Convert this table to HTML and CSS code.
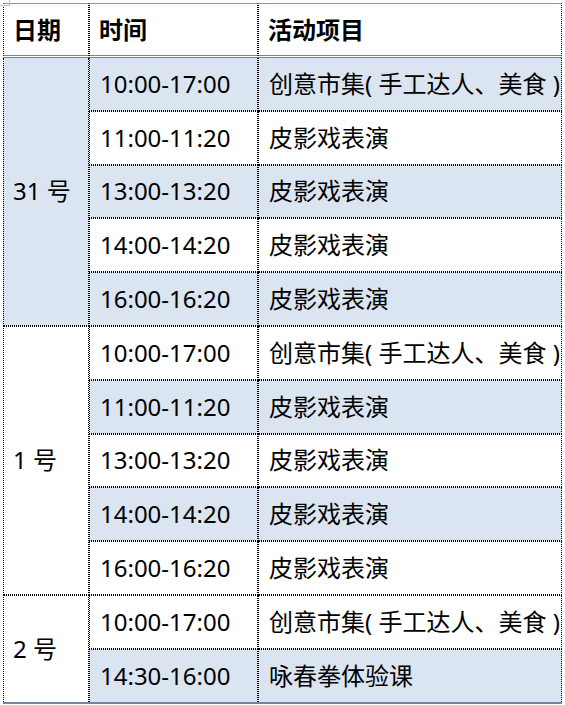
FILE: index.html
```html
<!DOCTYPE html>
<html lang="zh-CN">
<head>
<meta charset="utf-8">
<title>活动安排</title>
<link rel="stylesheet" href="styles.css">
</head>
<body>
<div class="handle"></div>
<table class="schedule">
  <colgroup>
    <col class="c-date">
    <col class="c-time">
    <col class="c-act">
  </colgroup>
  <thead>
    <tr>
      <th>日期</th>
      <th>时间</th>
      <th>活动项目</th>
    </tr>
  </thead>
  <tbody>
    <tr class="alt">
      <td class="date alt" rowspan="5">31 号</td>
      <td>10:00-17:00</td>
      <td>创意市集( 手工达人、美食 )</td>
    </tr>
    <tr>
      <td>11:00-11:20</td>
      <td>皮影戏表演</td>
    </tr>
    <tr class="alt">
      <td>13:00-13:20</td>
      <td>皮影戏表演</td>
    </tr>
    <tr>
      <td>14:00-14:20</td>
      <td>皮影戏表演</td>
    </tr>
    <tr class="alt">
      <td>16:00-16:20</td>
      <td>皮影戏表演</td>
    </tr>
    <tr>
      <td class="date" rowspan="5">1 号</td>
      <td>10:00-17:00</td>
      <td>创意市集( 手工达人、美食 )</td>
    </tr>
    <tr class="alt">
      <td>11:00-11:20</td>
      <td>皮影戏表演</td>
    </tr>
    <tr>
      <td>13:00-13:20</td>
      <td>皮影戏表演</td>
    </tr>
    <tr class="alt">
      <td>14:00-14:20</td>
      <td>皮影戏表演</td>
    </tr>
    <tr>
      <td>16:00-16:20</td>
      <td>皮影戏表演</td>
    </tr>
    <tr>
      <td class="date" rowspan="2">2 号</td>
      <td>10:00-17:00</td>
      <td>创意市集( 手工达人、美食 )</td>
    </tr>
    <tr class="alt last">
      <td>14:30-16:00</td>
      <td>咏春拳体验课</td>
    </tr>
  </tbody>
</table>
</body>
</html>
```

FILE: styles.css
```css
html, body {
  margin: 0;
  padding: 0;
  background: #ffffff;
}

body {
  position: relative;
  font-family: "Noto Sans", "Noto Sans CJK SC", sans-serif;
  color: #000000;
}

.handle {
  position: absolute;
  left: 0;
  top: 0;
  width: 9px;
  height: 5px;
  border-right: 1px solid #b8c2cc;
  border-bottom: 1px solid #b8c2cc;
}

.schedule {
  margin: 3px 0 0 3px;
  width: 559px;
  border-collapse: separate;
  border-spacing: 0;
  table-layout: fixed;
  font-size: 24px;
  border-bottom: 2px solid #6f87a3;
}

.c-date { width: 86px; }
.c-time { width: 169px; }
.c-act { width: 304px; }

.schedule th,
.schedule td {
  text-align: left;
  vertical-align: middle;
  white-space: nowrap;
  border-left: 1px dotted #000;
  border-right: 1px dotted #000;
  line-height: 30px;
}

.schedule th {
  height: 51px;
  padding: 0 0 0 9px;
  font-weight: bold;
  border-top: 1px solid #7e95b1;
  border-bottom: 3px double #6f87a3;
}

.schedule td {
  height: 51.8px;
  padding: 0 0 0 10px;
  border-top: 1px dotted #000;
  border-bottom: 1px dotted #000;
  background: #ffffff;
}

.schedule tbody tr:first-child td {
  border-top: none;
}

.schedule tr.last td,
.schedule td.date:last-child {
  border-bottom: none;
}

.schedule tr.alt td {
  background: #dbe5f1;
}

.schedule td.date {
  background: #ffffff;
  padding-left: 9px;
}

.schedule tr.alt td.date.alt,
.schedule td.date.alt {
  background: #dbe5f1;
}

.schedule th:first-child,
.schedule td.date {
  border-left: 1px dotted #000;
}

.schedule tr:not(:first-child) td.date {
  border-bottom: 1px dotted #000;
}

.schedule tbody tr:nth-child(11) td.date {
  border-bottom: none;
}
```
